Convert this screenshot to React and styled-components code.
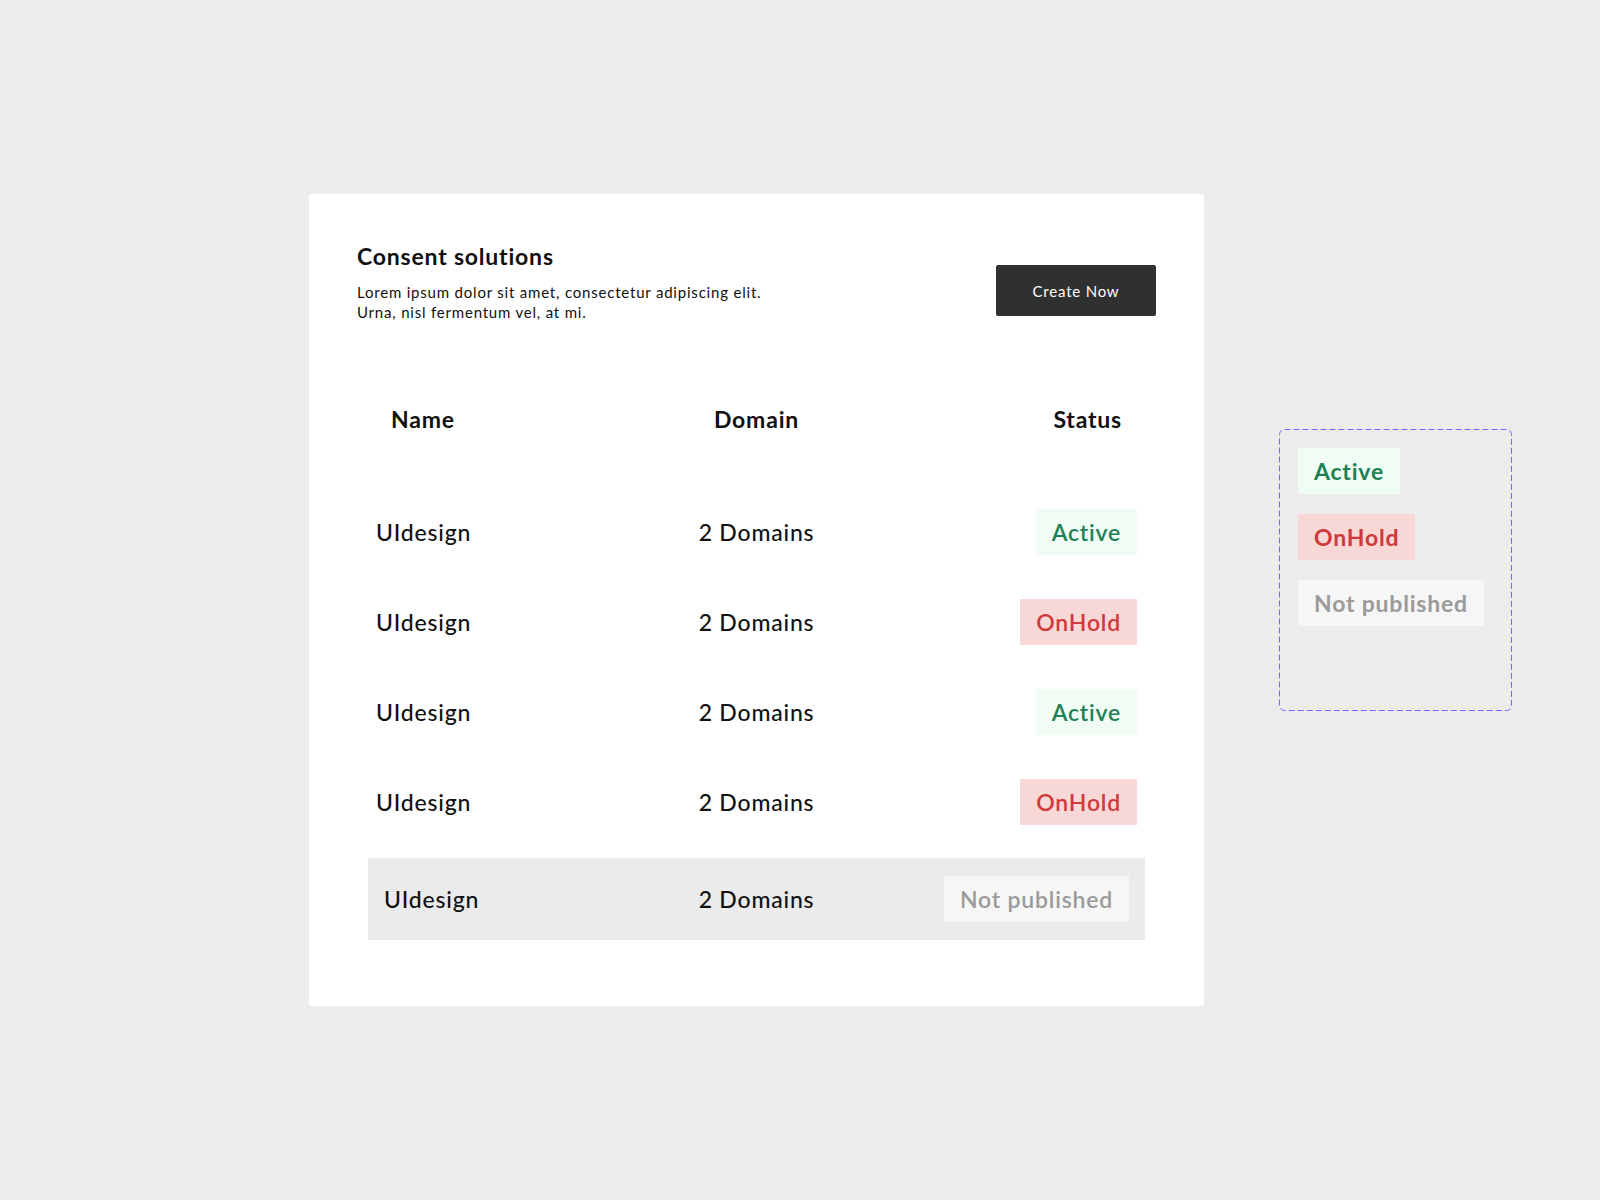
import React from "react"
import styled, { createGlobalStyle } from "styled-components"

const rows = [
  { name: "UIdesign", domain: "2 Domains", status: "active" },
  { name: "UIdesign", domain: "2 Domains", status: "hold" },
  { name: "UIdesign", domain: "2 Domains", status: "active" },
  { name: "UIdesign", domain: "2 Domains", status: "hold" },
  { name: "UIdesign", domain: "2 Domains", status: "draft", hover: true },
]

const labels = { active: "Active", hold: "OnHold", draft: "Not published" }

const dashed =
  "data:image/svg+xml," +
  encodeURIComponent(
    '<svg xmlns="http://www.w3.org/2000/svg" width="233" height="282"><rect x="0.5" y="0.5" width="232" height="281" rx="5" fill="none" stroke="#7b61ff" stroke-dasharray="6 3"/></svg>'
  )

function App() {
  return (
    <Page>
      <GlobalStyle />
      <Card>
        <Header>
          <div>
            <Title>Consent solutions</Title>
            <Desc>
              Lorem ipsum dolor sit amet, consectetur adipiscing elit.
              <br />
              Urna, nisl fermentum vel, at mi.
            </Desc>
          </div>
          <Button>Create Now</Button>
        </Header>
        <Table>
          <HeadRow>
            <HeadCell>Name</HeadCell>
            <HeadCell>Domain</HeadCell>
            <HeadCell>Status</HeadCell>
          </HeadRow>
          {rows.map((r, i) => (
            <Row key={i} $hover={r.hover}>
              <Cell>{r.name}</Cell>
              <Cell>{r.domain}</Cell>
              <Badge $kind={r.status}>{labels[r.status]}</Badge>
            </Row>
          ))}
        </Table>
      </Card>
      <Variants>
        <Badge $kind="active" $bold>Active</Badge>
        <Badge $kind="hold" $bold>OnHold</Badge>
        <Badge $kind="draft" $bold>Not published</Badge>
      </Variants>
    </Page>
  )
}

const GlobalStyle = createGlobalStyle`
  body {
    margin: 0;
    background: #ececec;
    font-family: "Lato", "Open Sans", sans-serif;
    letter-spacing: 0.05em;
    color: #111;
  }
`
const Page = styled.div`
  min-height: 1200px;
  display: flex;
  align-items: flex-start;
  gap: 75px;
  padding: 194px 0 0 309px;
  box-sizing: border-box;
`
const Card = styled.section`
  width: 895px;
  box-sizing: border-box;
  background: #fff;
  border-radius: 3px;
  padding: 48px 48px 66px;
`
const Header = styled.header`
  display: flex;
  justify-content: space-between;
  align-items: flex-start;
`
const Title = styled.h2`
  margin: 0;
  font-size: 23px;
  line-height: 28px;
  font-weight: 700;
  color: #111;
`
const Desc = styled.p`
  margin: 12px 0 0;
  font-size: 15px;
  line-height: 20px;
  color: #111;
`
const Button = styled.button`
  margin-top: 23px;
  width: 160px;
  height: 51px;
  border: none;
  border-radius: 2px;
  background: #2f3030;
  color: #fff;
  font-family: inherit;
  letter-spacing: inherit;
  font-size: 15px;
`
const Table = styled.div`
  margin: 74px 11px 0;
  display: flex;
  flex-direction: column;
`
const RowBase = styled.div`
  display: grid;
  grid-template-columns: 1fr auto 1fr;
  align-items: center;
  & > :nth-child(1) { justify-self: start; }
  & > :nth-child(2) { justify-self: center; }
  & > :nth-child(3) { justify-self: end; }
`
const HeadRow = styled(RowBase)`
  height: 46px;
  padding: 0 23px;
  margin-bottom: 45px;
`
const HeadCell = styled.span`
  font-size: 23px;
  font-weight: 700;
`
const Row = styled(RowBase)`
  height: ${p => (p.$hover ? "82px" : "90px")};
  margin-top: ${p => (p.$hover ? "11px" : "0")};
  padding: 0 ${p => (p.$hover ? "16px" : "8px")};
  background: ${p => (p.$hover ? "#ebebeb" : "transparent")};
`
const Cell = styled.span`
  font-size: 23px;
  font-weight: 500;
  color: #111;
`
const badgeColors = {
  active: { bg: "#effdf5", fg: "#1e8055" },
  hold: { bg: "#f8d7d7", fg: "#d0393b" },
  draft: { bg: "#f6f6f6", fg: "#9a9a9a" },
}
const Badge = styled.span`
  display: inline-flex;
  align-items: center;
  height: 46px;
  padding: 0 16px;
  box-sizing: border-box;
  font-size: 23px;
  font-weight: ${p => (p.$bold ? 700 : 600)};
  background: ${p => badgeColors[p.$kind].bg};
  color: ${p => badgeColors[p.$kind].fg};
`
const Variants = styled.div`
  margin-top: 235px;
  width: 233px;
  height: 282px;
  box-sizing: border-box;
  background: url("${dashed}") no-repeat;
  padding: 19px;
  display: flex;
  flex-direction: column;
  align-items: flex-start;
  gap: 20px;
`

export default App
